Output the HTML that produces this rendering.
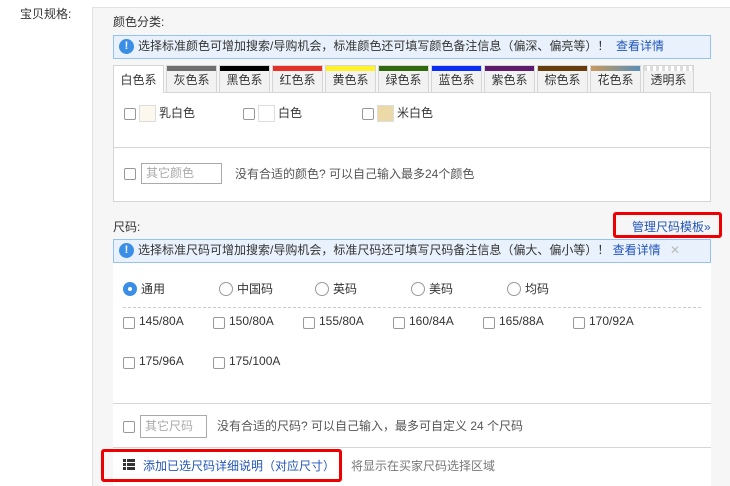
<!DOCTYPE html>
<html><head><meta charset="utf-8"><style>
*{margin:0;padding:0;box-sizing:border-box}
html,body{width:730px;height:486px;overflow:hidden}
body{background:#fff;font-family:"Liberation Sans","Noto Sans CJK SC",sans-serif;font-size:12px;color:#333;position:relative}
.a{position:absolute;white-space:nowrap}
.panel{position:absolute;left:92px;top:7px;width:638px;height:479px;background:#f6f6f6;border:1px solid #e2e2e2;border-bottom:none;border-right:none}
.info{position:absolute;left:113px;width:598px;height:24px;background:#e9f2fc;border:1px solid #93c3ee;line-height:21px;padding-left:24px}
.info .ic{position:absolute;left:5px;top:3px;width:15px;height:15px;border-radius:50%;background:#3a8ee6;color:#fff;font-weight:bold;font-size:11px;line-height:15px;text-align:center}
.lk{color:#2255bb}
.tab{position:absolute;top:65px;width:51px;height:27px;background:#f2f2f2;border:1px solid #d6d6d6;border-bottom:none;text-align:center;line-height:29px}
.tab i{position:absolute;left:0;right:0;top:0;height:5px}
.cb{position:absolute;width:12px;height:12px;border:1px solid #999;border-radius:2px;background:#fff}
.rd{position:absolute;width:14px;height:14px;border:1px solid #999;border-radius:50%;background:#fff}
.sw{position:absolute;width:17px;height:17px;border:1px solid #ddd}
.inp{position:absolute;border:1px solid #aaa;background:#fff;color:#aaa;padding-left:4px;line-height:18px;height:21px;width:81px}
.red{position:absolute;border:3px solid #e00;border-radius:3px}
</style></head><body>
<div class="a" style="left:20px;top:5px">宝贝规格:</div>
<div class="panel"></div>
<div class="a" style="left:113px;top:13px">颜色分类:</div>
<div class="info" style="top:35px"><span class="ic">!</span>选择标准颜色可增加搜索/导购机会，标准颜色还可填写颜色备注信息（偏深、偏亮等）！ <span class="lk">&nbsp;查看详情</span></div>

<div class="tab" style="left:113px;background:#fff;height:28px;z-index:2">白色系</div>
<div class="tab" style="left:166px"><i style="background:#6f6f6f"></i>灰色系</div>
<div class="tab" style="left:219px"><i style="background:#000"></i>黑色系</div>
<div class="tab" style="left:272px"><i style="background:#e53228"></i>红色系</div>
<div class="tab" style="left:325px"><i style="background:#fff22a"></i>黄色系</div>
<div class="tab" style="left:378px"><i style="background:#2f6a0e"></i>绿色系</div>
<div class="tab" style="left:431px"><i style="background:#0a2cf5"></i>蓝色系</div>
<div class="tab" style="left:484px"><i style="background:#5e1a6c"></i>紫色系</div>
<div class="tab" style="left:537px"><i style="background:#673d0e"></i>棕色系</div>
<div class="tab" style="left:590px"><i style="background:linear-gradient(90deg,#c89a5e,#5a8fb6)"></i>花色系</div>
<div class="tab" style="left:643px"><i style="background:repeating-linear-gradient(90deg,#ddd 0 3px,#fff 3px 6px)"></i>透明系</div>

<div class="a" style="left:113px;top:92px;width:598px;height:110px;background:#fff;border:1px solid #d6d6d6"></div>
<div class="a" style="left:113px;top:147px;width:598px;height:1px;background:#d6d6d6"></div>
<div class="cb" style="left:124px;top:108px"></div><div class="sw" style="left:139px;top:105px;background:#fdf8ee"></div><div class="a" style="left:159px;top:104px">乳白色</div>
<div class="cb" style="left:243px;top:108px"></div><div class="sw" style="left:258px;top:105px;background:#fff"></div><div class="a" style="left:278px;top:104px">白色</div>
<div class="cb" style="left:362px;top:108px"></div><div class="sw" style="left:377px;top:105px;background:#ecd9a8"></div><div class="a" style="left:397px;top:104px">米白色</div>
<div class="cb" style="left:124px;top:168px"></div><div class="inp" style="left:141px;top:163px">其它颜色</div>
<div class="a" style="left:235px;top:165px;color:#555">没有合适的颜色? 可以自己输入最多24个颜色</div>

<div class="a" style="left:113px;top:218px">尺码:</div>
<div class="a lk" style="left:632px;top:218px">管理尺码模板»</div>
<div class="red" style="left:613px;top:212px;width:109px;height:26px"></div>
<div class="info" style="top:239px"><span class="ic">!</span>选择标准尺码可增加搜索/导购机会，标准尺码还可填写尺码备注信息（偏大、偏小等）！ <span class="lk">查看详情</span> <span style="color:#bbb;margin-left:6px">✕</span></div>
<div class="a" style="left:113px;top:263px;width:598px;height:223px;background:#fff"></div>
<div class="rd" style="left:123px;top:282px;background:#3a8ee6;border-color:#3a8ee6"></div><div class="a" style="left:128px;top:287px;width:4px;height:4px;background:#fff;border-radius:50%"></div>
<div class="a" style="left:141px;top:280px">通用</div>
<div class="rd" style="left:219px;top:282px"></div><div class="a" style="left:237px;top:280px">中国码</div>
<div class="rd" style="left:315px;top:282px"></div><div class="a" style="left:333px;top:280px">英码</div>
<div class="rd" style="left:411px;top:282px"></div><div class="a" style="left:429px;top:280px">美码</div>
<div class="rd" style="left:507px;top:282px"></div><div class="a" style="left:525px;top:280px">均码</div>
<div class="a" style="left:123px;top:307px;width:578px;border-top:1px dashed #ccc"></div>
<div class="cb" style="left:123px;top:317px"></div><div class="a" style="left:139px;top:314px">145/80A</div>
<div class="cb" style="left:213px;top:317px"></div><div class="a" style="left:229px;top:314px">150/80A</div>
<div class="cb" style="left:303px;top:317px"></div><div class="a" style="left:319px;top:314px">155/80A</div>
<div class="cb" style="left:393px;top:317px"></div><div class="a" style="left:409px;top:314px">160/84A</div>
<div class="cb" style="left:483px;top:317px"></div><div class="a" style="left:499px;top:314px">165/88A</div>
<div class="cb" style="left:573px;top:317px"></div><div class="a" style="left:589px;top:314px">170/92A</div>
<div class="cb" style="left:123px;top:357px"></div><div class="a" style="left:139px;top:354px">175/96A</div>
<div class="cb" style="left:213px;top:357px"></div><div class="a" style="left:229px;top:354px">175/100A</div>
<div class="a" style="left:113px;top:403px;width:598px;height:1px;background:#d6d6d6"></div>
<div class="cb" style="left:123px;top:421px"></div><div class="inp" style="left:140px;top:415px;width:67px;height:23px;line-height:20px">其它尺码</div>
<div class="a" style="left:217px;top:417px;color:#555">没有合适的尺码? 可以自己输入，最多可自定义 24 个尺码</div>
<div class="a" style="left:113px;top:447px;width:598px;height:1px;background:#d6d6d6"></div>
<svg class="a" style="left:123px;top:459px" width="12" height="11"><g fill="#333"><rect x="0" y="0" width="3" height="3"/><rect x="4" y="0" width="8" height="3"/><rect x="0" y="4" width="3" height="3"/><rect x="4" y="4" width="8" height="3"/><rect x="0" y="8" width="3" height="3"/><rect x="4" y="8" width="8" height="3"/></g></svg>
<div class="a lk" style="left:143px;top:457px">添加已选尺码详细说明（对应尺寸）</div>
<div class="a" style="left:351px;top:457px;color:#777">将显示在买家尺码选择区域</div>
<div class="red" style="left:101px;top:449px;width:241px;height:33px"></div>
</body></html>
